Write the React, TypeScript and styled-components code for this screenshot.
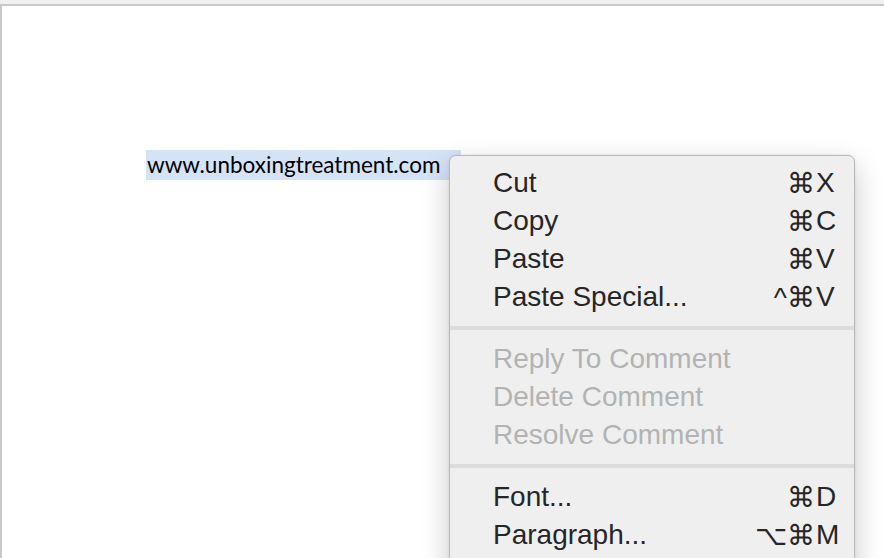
import styled, { createGlobalStyle } from "styled-components";
import { FC } from "react";

interface MenuEntry {
  label: string;
  mods?: string;
  keyChar?: string;
  disabled?: boolean;
}

const groups: MenuEntry[][] = [
  [
    { label: "Cut", mods: "⌘", keyChar: "X" },
    { label: "Copy", mods: "⌘", keyChar: "C" },
    { label: "Paste", mods: "⌘", keyChar: "V" },
    { label: "Paste Special...", mods: "^⌘", keyChar: "V" },
  ],
  [
    { label: "Reply To Comment", disabled: true },
    { label: "Delete Comment", disabled: true },
    { label: "Resolve Comment", disabled: true },
  ],
  [
    { label: "Font...", mods: "⌘", keyChar: "D" },
    { label: "Paragraph...", mods: "⌥⌘", keyChar: "M" },
  ],
];

const App: FC = () => {
  return (
    <>
      <GlobalStyle />
      <Window>
        <TopStrip />
        <Document>
          <Selected>www.unboxingtreatment.com</Selected>
          <Menu>
            {groups.map((group, gi) => (
              <Group key={gi}>
                {gi > 0 && <Separator />}
                {group.map((item) => (
                  <Row key={item.label} disabled={item.disabled}>
                    <Label>{item.label}</Label>
                    {item.keyChar && (
                      <Shortcut>
                        <Mods>{item.mods}</Mods>
                        <KeyChar>{item.keyChar}</KeyChar>
                      </Shortcut>
                    )}
                  </Row>
                ))}
              </Group>
            ))}
          </Menu>
        </Document>
      </Window>
    </>
  );
};

const GlobalStyle = createGlobalStyle`
  html, body {
    margin: 0;
    padding: 0;
    width: 884px;
    height: 558px;
    overflow: hidden;
    background: #ffffff;
  }
`;

const Window = styled.div`
  width: 884px;
  height: 558px;
  display: flex;
  flex-direction: column;
  overflow: hidden;
`;

const TopStrip = styled.div`
  height: 4px;
  background: #f0f0f0;
  flex-shrink: 0;
`;

const Document = styled.div`
  flex: 1;
  position: relative;
  background: #ffffff;
  border-top: 2px solid #c9c9c9;
  border-left: 2px solid #c9c9c9;
  padding: 144px 0 0 144px;
`;

const Selected = styled.span`
  display: inline-block;
  height: 30px;
  line-height: 29px;
  width: 314px;
  padding-left: 1px;
  background: #d5e3f7;
  font-family: "Lato", "Open Sans", sans-serif;
  font-size: 22.5px;
  color: #000000;
`;

const Menu = styled.div`
  position: absolute;
  left: 447px;
  top: 149px;
  width: 404px;
  height: 460px;
  padding-top: 8px;
  background: #efefef;
  border: 1px solid #b9b9b9;
  border-radius: 7px;
  box-shadow: 0 10px 28px rgba(0, 0, 0, 0.22), 0 0 3px rgba(0, 0, 0, 0.08);
  font-family: "Liberation Sans", Arial, sans-serif;
  font-size: 28px;
`;

const Group = styled.div`
  display: flex;
  flex-direction: column;
`;

const Separator = styled.div`
  height: 4px;
  margin: 10px 0;
  background: #dcdcdc;
`;

const Row = styled.div<{ disabled?: boolean }>`
  height: 38px;
  display: flex;
  align-items: center;
  justify-content: space-between;
  padding: 0 14px 0 43px;
  color: ${({ disabled }) => (disabled ? "#b3b3b3" : "#262626")};
`;

const Label = styled.span`
  white-space: nowrap;
`;

const Shortcut = styled.span`
  display: flex;
  align-items: center;
  white-space: nowrap;
`;

const Mods = styled.span`
  text-align: right;
`;

const KeyChar = styled.span`
  width: 24px;
  padding-left: 1px;
`;

export default App;
